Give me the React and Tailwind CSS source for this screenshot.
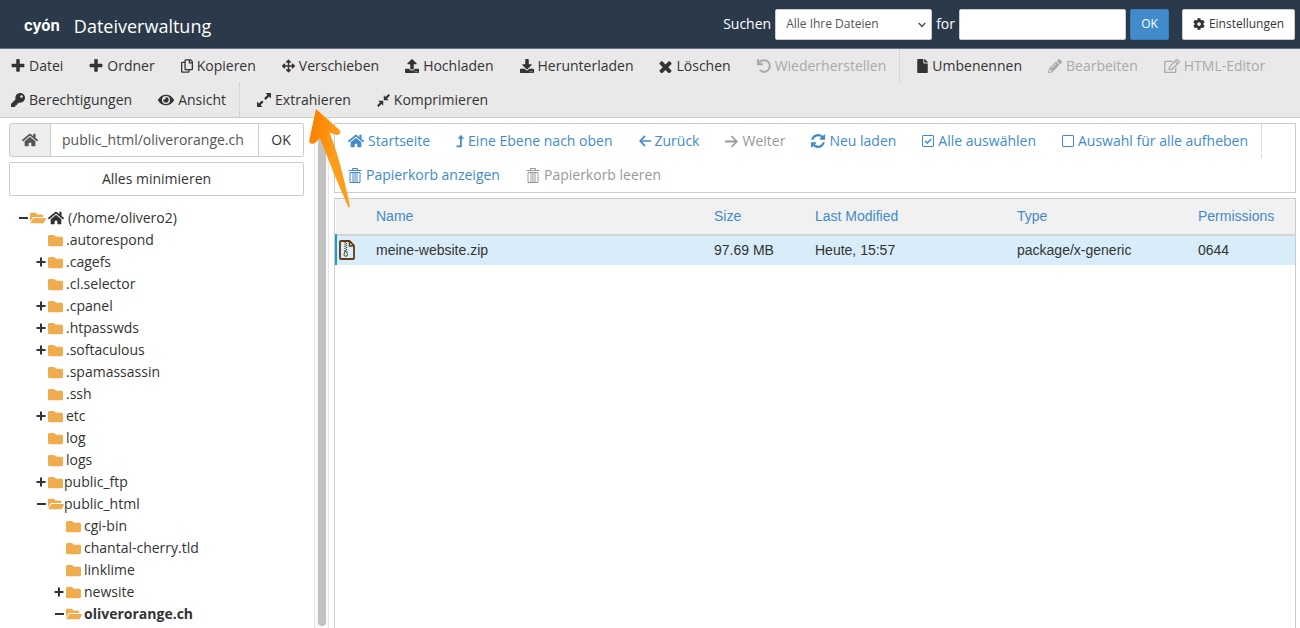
import React from 'react';
import {
  FaArrowsAlt, FaCog, FaDownload, FaEye, FaFile, FaFolder, FaFolderOpen, FaHome,
  FaKey, FaPencilAlt, FaRegCopy, FaRegEdit, FaUndo, FaUpload,
} from 'react-icons/fa';

const Glyph = ({ d, className, viewBox = '128 128 1536 1536' }) => (
  <svg viewBox={viewBox} className={className} fill="currentColor" aria-hidden="true">
    <path d={d} />
  </svg>
);

const PlusIcon = ({ className }) => (
  <Glyph className={className} d="M1600 736v192q0 40-28 68t-68 28h-416v416q0 40-28 68t-68 28H800q-40 0-68-28t-28-68v-416H288q-40 0-68-28t-28-68V736q0-40 28-68t68-28h416V224q0-40 28-68t68-28h192q40 0 68 28t28 68v416h416q40 0 68 28t28 68z" />
);

const CloseIcon = ({ className }) => (
  <Glyph className={className} viewBox="256 256 1280 1280" d="M1490 1322q0 40-28 68l-136 136q-28 28-68 28t-68-28l-294-294-294 294q-28 28-68 28t-68-28l-136-136q-28-28-28-68t28-68l294-294-294-294q-28-28-28-68t28-68l136-136q28-28 68-28t68 28l294 294 294-294q28-28 68-28t68 28l136 136q28 28 28 68t-28 68l-294 294 294 294q28 28 28 68z" />
);

const RefreshIcon = ({ className }) => (
  <Glyph className={className} d="M1639 1056q0 5-1 7-64 268-268 434.5T892 1664q-146 0-282.5-55T366 1452l-129 129q-19 19-45 19t-45-19-19-45v-448q0-26 19-45t45-19h448q26 0 45 19t19 45-19 45l-137 137q71 66 161 102t187 36q134 0 250-65t186-179q11-17 53-117 8-23 30-23h192q13 0 22.5 9.5t9.5 22.5zm25-800v448q0 26-19 45t-45 19h-448q-26 0-45-19t-19-45 19-45l138-138Q1117 384 896 384q-134 0-250 65T460 628q-11 17-53 117-8 23-30 23H178q-13 0-22.5-9.5T146 736v-7q65-268 270-434.5T896 128q146 0 284 55.5T1425 340l130-129q19-19 45-19t45 19 19 45z" />
);

const ExpandIcon = ({ className }) => (
  <Glyph className={className} viewBox="0 0 14 14" d="M8.500 0H14v5.500l-1.900-1.900-3.300 3.300-1.700-1.700 3.300-3.300zM0 14V8.500l1.900 1.900 3-3 1.700 1.700-3 3L5.500 14z" />
);

const CompressIcon = ({ className }) => (
  <Glyph className={className} viewBox="0 0 14 14" d="M12.400 0L14 1.600l-3.200 3.200 1.900 1.900H7.300V1.300l1.900 1.900zM1.600 14L0 12.400l3.200-3.200-1.900-1.900h5.400v5.400l-1.900-1.900z" />
);

const LevelUpIcon = ({ className }) => (
  <Glyph className={className} viewBox="0 0 9 14" d="M5.500 0L9 4.500H6.500V14H1L0 12.200h4.500V4.500H2z" />
);

const ArrowIcon = ({ className, back }) => (
  <svg viewBox="0 0 13 13" className={className} fill="none" stroke="currentColor" strokeWidth="1.8" aria-hidden="true">
    <path d={back ? 'M6.500 1L1.300 6.500l5.200 5.500M1.500 6.500H13' : 'M6.500 1l5.200 5.500-5.200 5.500M11.500 6.500H0'} />
  </svg>
);

const BackIcon = ({ className }) => <ArrowIcon className={className} back />;

const BoxIcon = ({ className, checked }) => (
  <svg viewBox="0 0 12 12" className={className} fill="none" stroke="currentColor" aria-hidden="true">
    <rect x="0.500" y="0.500" width="11" height="11" rx="0.500" />
    {checked && <path d="M3 5.800l2.300 2.400L9.200 4" strokeWidth="1.500" />}
  </svg>
);

const CheckedBoxIcon = ({ className }) => <BoxIcon className={className} checked />;

const TrashIcon = ({ className }) => (
  <svg viewBox="0 0 13 15" className={className} fill="none" stroke="currentColor" aria-hidden="true">
    <path d="M0 2.500h13M4 2.500v-2h5v2M1.500 4.500h10v10h-10zM4.500 5v9M6.500 5v9M8.500 5v9" />
  </svg>
);

const ZipIcon = () => (
  <svg viewBox="0 0 16 20" className="h-5 w-4" fill="none" stroke="#5f3c12" aria-label="ZIP" role="img">
    <path d="M2 1h8.500L15 5.500V18a1 1 0 0 1-1 1H2a1 1 0 0 1-1-1V2a1 1 0 0 1 1-1z" strokeWidth="1.800" />
    <path d="M10.500 1v5H15" strokeWidth="1.400" />
    <path d="M6 2v9M7.500 3v8" strokeWidth="1.300" strokeDasharray="1 1" />
    <path d="M6 11h1.500l1 3.500a1.700 1.700 0 1 1-3.500 0z" />
  </svg>
);

const actions = [
  { label: 'Datei', Icon: PlusIcon, size: 'w-3.5 h-3.5' },
  { label: 'Ordner', Icon: PlusIcon, size: 'w-3.5 h-3.5' },
  { label: 'Kopieren', Icon: FaRegCopy, size: 'w-3 h-3.5' },
  { label: 'Verschieben', Icon: FaArrowsAlt, size: 'w-[13px] h-3.5' },
  { label: 'Hochladen', Icon: FaUpload, size: 'w-3.5 h-3.5' },
  { label: 'Herunterladen', Icon: FaDownload, size: 'w-3.5 h-3.5' },
  { label: 'Löschen', Icon: CloseIcon, size: 'w-[13px] h-[13px]' },
  { label: 'Wiederherstellen', Icon: FaUndo, size: 'w-3.5 h-3.5', disabled: true, last: true },
  { label: 'Umbenennen', Icon: FaFile, size: 'w-[11px] h-3.5' },
  { label: 'Bearbeiten', Icon: FaPencilAlt, size: 'w-3.5 h-3.5', disabled: true },
  { label: 'HTML-Editor', Icon: FaRegEdit, size: 'w-4 h-3.5', disabled: true },
  { label: 'Berechtigungen', Icon: FaKey, size: 'w-3.5 h-3.5' },
  { label: 'Ansicht', Icon: FaEye, size: 'w-4 h-4', last: true },
  { label: 'Extrahieren', Icon: ExpandIcon, size: 'w-3.5 h-3.5' },
  { label: 'Komprimieren', Icon: CompressIcon, size: 'w-[13px] h-[13px]' },
];

const navigation = [
  { label: 'Startseite', Icon: FaHome, size: 'w-4 h-4' },
  { label: 'Eine Ebene nach oben', Icon: LevelUpIcon, size: 'w-2 h-3.5' },
  { label: 'Zurück', Icon: BackIcon, size: 'w-3 h-3' },
  { label: 'Weiter', Icon: ArrowIcon, size: 'w-[13px] h-[13px]', disabled: true },
  { label: 'Neu laden', Icon: RefreshIcon, size: 'w-3.5 h-3.5' },
  { label: 'Alle auswählen', Icon: CheckedBoxIcon, size: 'w-3 h-3' },
  { label: 'Auswahl für alle aufheben', Icon: BoxIcon, size: 'w-3 h-3', last: true },
  { label: 'Papierkorb anzeigen', Icon: TrashIcon, size: 'w-3.5 h-[15px]' },
  { label: 'Papierkorb leeren', Icon: TrashIcon, size: 'w-3.5 h-[15px]', disabled: true },
];

const tree = [
  { name: '.autorespond', level: 1 },
  { name: '.cagefs', level: 1, state: 'closed' },
  { name: '.cl.selector', level: 1 },
  { name: '.cpanel', level: 1, state: 'closed' },
  { name: '.htpasswds', level: 1, state: 'closed' },
  { name: '.softaculous', level: 1, state: 'closed' },
  { name: '.spamassassin', level: 1 },
  { name: '.ssh', level: 1 },
  { name: 'etc', level: 1, state: 'closed' },
  { name: 'log', level: 1 },
  { name: 'logs', level: 1 },
  { name: 'public_ftp', level: 1, state: 'closed', tight: true },
  { name: 'public_html', level: 1, state: 'open', tight: true },
  { name: 'cgi-bin', level: 2 },
  { name: 'chantal-cherry.tld', level: 2 },
  { name: 'linklime', level: 2 },
  { name: 'newsite', level: 2, state: 'closed' },
  { name: 'oliverorange.ch', level: 2, state: 'open', active: true },
];

const indent = { 0: 'pl-[9px]', 1: 'pl-[27px]', 2: 'pl-[45px]' };

const ToolbarItem = ({ label, Icon, size, disabled, last, color, mutedColor }) => (
  <li className={last ? 'mr-1 border-r border-dotted border-[#c4c4c4]' : ''}>
    <button
      type="button"
      disabled={disabled}
      className={`flex h-[34px] items-center gap-1 px-[13px] whitespace-nowrap ${disabled ? mutedColor : color}`}
    >
      <Icon className={`shrink-0 ${size}`} />
      {label}
    </button>
  </li>
);

const Header = () => (
  <header className="flex h-[49px] items-center justify-between border-b border-[#6c7683] bg-[#2b3a4a] pl-6 pr-[5px] text-white">
    <div className="flex items-center gap-3.5">
      <span className="pt-1 font-['Inter',sans-serif] text-[15px] font-bold leading-5">cyón</span>
      <h1 className="pt-1 text-lg leading-6">Dateiverwaltung</h1>
    </div>
    <form className="flex items-center" onSubmit={(e) => e.preventDefault()}>
      <label htmlFor="scope" className="mr-1">Suchen</label>
      <div className="relative">
        <select
          id="scope"
          className="h-[31px] w-[157px] appearance-none rounded-[2px] border border-[#ccc] bg-white pl-2.5 text-xs text-[#555]"
        >
          <option>Alle Ihre Dateien</option>
        </select>
        <svg viewBox="0 0 8 6" className="pointer-events-none absolute right-1.5 top-[13px] h-1.5 w-2" fill="none" stroke="#444" strokeWidth="1.300">
          <path d="M0.800 1L4 4.500 7.200 1" />
        </svg>
      </div>
      <label htmlFor="query" className="mx-1">for</label>
      <input id="query" type="text" className="h-[31px] w-[167px] rounded-[2px] border border-[#ccc] bg-white px-2 text-xs text-[#555]" />
      <button type="submit" className="ml-1 h-[31px] w-[39px] rounded-[2px] border border-[#357ebd] bg-[#428bca] text-xs">OK</button>
      <button type="button" className="ml-[13px] flex h-[31px] w-[113px] items-center justify-center gap-1 rounded-[2px] border border-[#ccc] bg-white text-xs text-[#333]">
        <FaCog className="h-3 w-3" />
        Einstellungen
      </button>
    </form>
  </header>
);

const TreeRow = ({ name, level, state, tight, active, root }) => (
  <li className={`flex h-[22px] items-center ${indent[level]}`}>
    <span className="flex w-3 shrink-0 items-center">
      {state && (
        <button type="button" aria-label={`${name} umschalten`} className="flex h-2.5 w-2.5 items-center">
          <svg viewBox="0 0 10 10" className="h-2.5 w-2.5" stroke="#333" strokeWidth="2">
            <path d={state === 'open' ? 'M1 5h9' : 'M0.500 5h9M5 0.500v9'} />
          </svg>
        </button>
      )}
    </span>
    {state === 'open'
      ? <FaFolderOpen className="h-4 w-4 shrink-0 text-[#f0ad4e]" />
      : <FaFolder className="h-[15px] w-[15px] shrink-0 text-[#f0ad4e]" />}
    {root && <FaHome className="ml-0.5 h-4 w-4 shrink-0" />}
    <a
      href="#tree"
      className={`${active ? 'font-bold' : ''} ${tight ? (state === 'open' ? '' : 'ml-px') : root ? 'ml-1' : state === 'open' ? 'ml-0.5' : 'ml-[3px]'}`}
    >
      {name}
    </a>
  </li>
);

const Sidebar = () => (
  <aside className="flex w-[314px] shrink-0 flex-col overflow-hidden pl-[9px] pr-2.5 pt-[5px]">
    <form className="flex h-[34px] shrink-0" onSubmit={(e) => e.preventDefault()}>
      <button type="button" aria-label="Startseite" className="flex w-[42px] items-center justify-center rounded-l-[3px] border border-[#ccc] bg-[#eee] text-[#555]">
        <FaHome className="h-4 w-4" />
      </button>
      <input
        type="text"
        aria-label="Pfad"
        defaultValue="public_html/oliverorange.ch"
        className="min-w-0 flex-1 border-y border-[#ccc] px-[11px] text-[#555]"
      />
      <button type="submit" className="w-[46px] rounded-r-[2px] border border-[#ccc]">OK</button>
    </form>
    <button type="button" className="mt-[5px] h-[34px] shrink-0 rounded-[2px] border border-[#ccc]">Alles minimieren</button>
    <ul className="mt-[11px]">
      <TreeRow name="(/home/olivero2)" level={0} state="open" root />
      {tree.map((item) => <TreeRow key={item.name} {...item} />)}
    </ul>
  </aside>
);

const FileTable = () => (
  <table className="w-full table-fixed text-left font-['Liberation_Sans',Arial,sans-serif]">
    <colgroup>
      <col className="w-9" />
      <col />
      <col className="w-[101px]" />
      <col className="w-[202px]" />
      <col className="w-[181px]" />
      <col className="w-[101px]" />
    </colgroup>
    <thead>
      <tr className="h-9 border-b-2 border-[#d4d4d4] bg-[#f1f1f1] text-[#428bca]">
        <th aria-label="Symbol" />
        <th className="px-1 pb-0.5 font-normal">Name</th>
        <th className="px-1 pb-0.5 font-normal">Size</th>
        <th className="px-1 pb-0.5 font-normal">Last Modified</th>
        <th className="px-1 pb-0.5 font-normal">Type</th>
        <th className="px-1 pb-0.5 font-normal">Permissions</th>
      </tr>
    </thead>
    <tbody>
      <tr className="h-[30px] bg-[#d8ecf9]">
        <td className="border-l-2 border-[#1d9ccf] pb-0.5 pl-0.5"><ZipIcon /></td>
        <td className="px-1 pb-0.5">meine-website.zip</td>
        <td className="px-1 pb-0.5">97.69 MB</td>
        <td className="px-1 pb-0.5">Heute, 15:57</td>
        <td className="px-1 pb-0.5">package/x-generic</td>
        <td className="px-1 pb-0.5">0644</td>
      </tr>
    </tbody>
  </table>
);

const PointerArrow = () => (
  <svg viewBox="0 0 42 102" className="pointer-events-none absolute left-[308px] top-[108px] h-[102px] w-[42px]" aria-hidden="true">
    <defs>
      <linearGradient id="pointer" x1="0" y1="0" x2="1" y2="0.300">
        <stop offset="0.200" stopColor="#fb8500" />
        <stop offset="0.700" stopColor="#ff9c1c" />
      </linearGradient>
    </defs>
    <path
      d="M8 1L31 21.500Q33.500 24 31.500 26Q29.500 27.500 27 26.500L21.500 24.500Q32 50 42 98.500L40.500 99.500Q25 65 12 30L7.500 34.500Q4 37 1.500 34.500Q1 33 1.500 31z"
      fill="url(#pointer)"
    />
  </svg>
);

const App = () => (
  <div className="relative flex h-screen flex-col overflow-hidden bg-white font-['Open_Sans',sans-serif] text-sm text-[#333]">
    <Header />
    <ul className="-ml-0.5 flex shrink-0 flex-wrap border-b border-[#ccc] bg-[#e9e9e9]">
      {actions.map((item) => (
        <ToolbarItem key={item.label} {...item} color="text-[#333]" mutedColor="text-[#a9a9a9]" />
      ))}
    </ul>
    <div className="flex min-h-0 flex-1">
      <Sidebar />
      <div className="w-[15px] shrink-0 border-x border-[#e6e6e6] bg-[#fafafa] px-[3px] py-0.5">
        <div className="h-full w-2 rounded-full bg-[#c1c1c1]" />
      </div>
      <main className="flex min-w-0 flex-1 flex-col pl-[5px] pr-1 pt-[5px]">
        <ul className="flex shrink-0 flex-wrap border border-[#ccc]">
          {navigation.map((item) => (
            <ToolbarItem key={item.label} {...item} color="text-[#428bca]" mutedColor="text-[#999]" />
          ))}
        </ul>
        <div className="mt-[5px] flex-1 border border-b-0 border-[#ccc]">
          <FileTable />
        </div>
      </main>
    </div>
    <PointerArrow />
  </div>
);

export default App;
